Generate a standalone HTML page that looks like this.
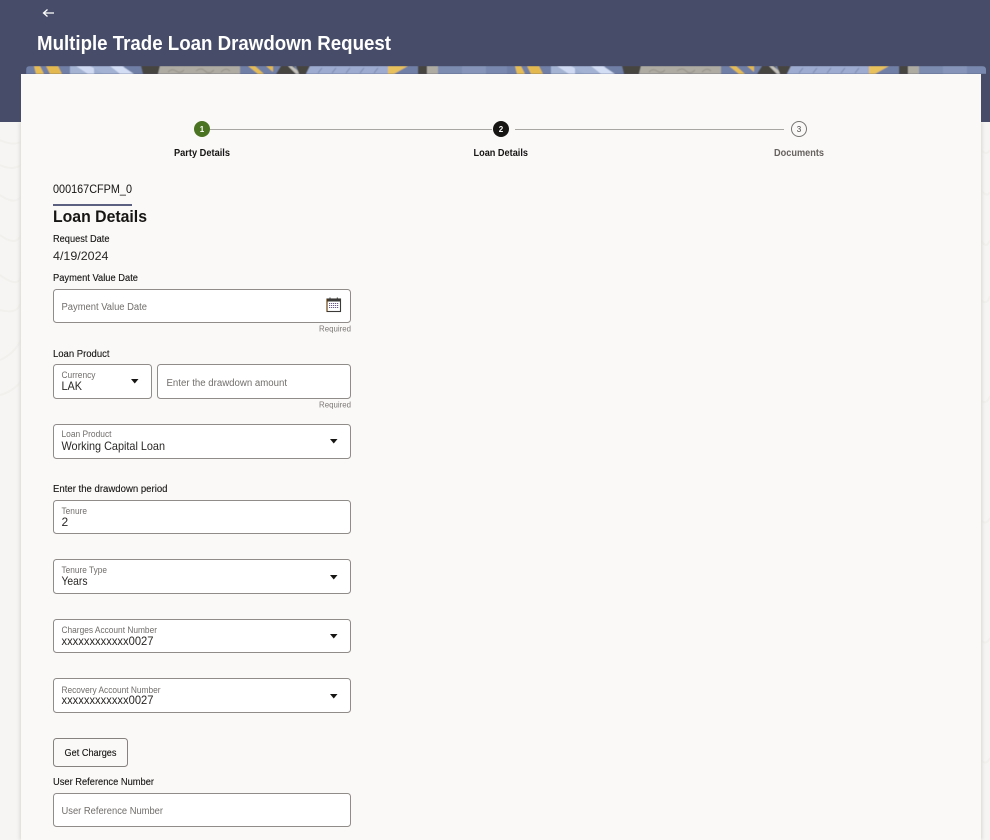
<!DOCTYPE html>
<html lang="en">
<head>
<meta charset="utf-8">
<title>Multiple Trade Loan Drawdown Request</title>
<style>
html,body{margin:0;padding:0;background:#f6f5f3;}
body{width:990px;height:840px;overflow:hidden;}
svg{display:block;}
text{font-family:"Liberation Sans",sans-serif;fill:#161513;}
.lbl{font-size:10px;stroke:#161513;stroke-width:.12px;}
.ph{font-size:10px;fill:#716e6b;}
.fl{font-size:9px;fill:#716e6b;}
.val{font-size:12px;fill:#2a2826;}
.req{font-size:8.4px;fill:#7c7976;}
.box{fill:#fff;stroke:#8f8c8a;stroke-width:1;}
</style>
</head>
<body>
<svg width="990" height="840" viewBox="0 0 990 840" xmlns="http://www.w3.org/2000/svg">
<defs>
<filter id="soft" x="0" y="0" width="1" height="1"><feGaussianBlur stdDeviation=".45"/></filter>
<filter id="shade" x="-50%" y="0" width="200%" height="1"><feGaussianBlur stdDeviation="1.500"/></filter>
<g id="tile">
<rect x="0" y="66" width="481" height="8" fill="#6f7fa6"/>
<polygon points="8,66 14,66 18,74 10,74" fill="#e6bd55"/>
<polygon points="20,66 32,66 36,74 24,74" fill="#e3b94f"/>
<rect x="44" y="66" width="20" height="8" fill="#a4b3d2"/>
<polygon points="50,66 66,66 78,74 62,74" fill="#cfdaf2"/>
<rect x="68" y="66" width="30" height="8" fill="#9dadcf"/>
<polygon points="64,66 84,66 92,74 78,74" fill="#a3b2d3"/>
<polygon points="84,66 96,66 108,74 94,74" fill="#d3ddf4"/>
<polygon points="115,66 134,66 132,74 117,74" fill="#47453f"/>
<polygon points="134,66 214,66 214,74 132,74" fill="#aeaba2"/>
<path d="M142 72q4-4 8-1t8-1M170 71q5-4 9 0t9-1M195 72q5-5 9-1" fill="none" stroke="#94918a" stroke-width="1"/>
<polygon points="222,66 229,66 238,74 232,74" fill="#e6bd55"/>
<polygon points="240,66 247,66 247,72" fill="#e3b94f"/>
<polygon points="255,66 268,66 272,74 250,74" fill="#47453f"/>
<polygon points="262,66 266,66 276,74 270,74" fill="#c4c2bc"/>
<polygon points="270,66 284,66 280,74 273,74" fill="#47453f"/>
<polygon points="284,66 362,66 362,74 280,74" fill="#9dabd0"/>
<path d="M292 73l4-5M306 73l4-5M320 73l4-5M334 73l4-5M348 73l4-5" stroke="#7786aa" stroke-width="1"/>
<polygon points="362,66 382,66 368,74 362,74" fill="#e8c05c"/>
<rect x="392" y="66" width="9" height="8" fill="#47453f"/>
<rect x="401" y="66" width="11" height="8" fill="#aeaba2"/>
<rect x="412" y="66" width="24" height="8" fill="#7c8bb0"/>
<rect x="436" y="66" width="24" height="8" fill="#8594b8"/>
<rect x="460" y="66" width="21" height="8" fill="#7888ae"/>
</g>
<clipPath id="strip"><path d="M26 74V70q0-4 4-4H982q4 0 4 4v4z"/></clipPath>
</defs>

<rect width="990" height="840" fill="#f6f5f3"/>
<g fill="none" stroke="#f1f0ed" stroke-width="2">
<path d="M0 140q12 6 21 2M0 165q12 6 21 0M0 195q14 10 21 2M0 235q16 12 21 0M0 275q22 16 21 -4M0 310q22 6 21 -14M0 360q14-6 21-20M0 395q14-4 21-14"/>
<path d="M981 150q6 6 9 0M981 190q6 8 9 2M981 240q5 10 9 0M981 300q6 6 9-4M981 400q5 6 9-4M981 520q5 6 9-2M981 640q5 6 9-2M981 760q5 6 9-2"/>
</g>
<rect width="990" height="122" fill="#474c69"/>

<g clip-path="url(#strip)">
<g filter="url(#soft)">
<use href="#tile" x="26"/>
<use href="#tile" x="507"/>
</g>
</g>

<rect x="19.500" y="122" width="963" height="718" fill="#dedcd8" filter="url(#shade)"/>
<rect x="21" y="74" width="960" height="766" fill="#fbf9f8"/>

<path d="M54 13H43.500M47.500 9.500L43.500 13L47.500 16.500" fill="none" stroke="#fff" stroke-width="1.300"/>
<text x="37" y="50" font-size="20.500" font-weight="700" textLength="354" lengthAdjust="spacingAndGlyphs" style="fill:#fff">Multiple Trade Loan Drawdown Request</text>

<!-- stepper -->
<rect x="210" y="129" width="282" height="1" fill="#a9a7a4"/>
<rect x="515" y="129" width="269" height="1" fill="#a9a7a4"/>
<circle cx="202" cy="129" r="8" fill="#4b7422"/>
<text x="202" y="132" font-size="8" font-weight="700" text-anchor="middle" style="fill:#fff">1</text>
<circle cx="501" cy="129" r="8" fill="#161513"/>
<text x="501" y="132" font-size="8" font-weight="700" text-anchor="middle" style="fill:#fff">2</text>
<circle cx="799" cy="129" r="7.500" fill="#fbf9f8" stroke="#777572"/>
<text x="799" y="132" font-size="8" text-anchor="middle" style="fill:#444">3</text>
<text x="174" y="156" font-size="10" font-weight="700" textLength="56" lengthAdjust="spacingAndGlyphs">Party Details</text>
<text x="473.500" y="156" font-size="10" font-weight="700" textLength="54.500" lengthAdjust="spacingAndGlyphs">Loan Details</text>
<text x="774" y="156" font-size="10" font-weight="700" textLength="50" lengthAdjust="spacingAndGlyphs" style="fill:#65625f">Documents</text>

<!-- heading -->
<text x="53" y="193" font-size="12" textLength="79" lengthAdjust="spacingAndGlyphs">000167CFPM_0</text>
<rect x="53" y="204" width="79" height="2" fill="#5b6080"/>
<text x="53" y="222" font-size="17" font-weight="700" textLength="94" lengthAdjust="spacingAndGlyphs">Loan Details</text>

<text class="lbl" x="53" y="242" textLength="56.500" lengthAdjust="spacingAndGlyphs">Request Date</text>
<text class="val" x="53" y="260" textLength="55.500" lengthAdjust="spacingAndGlyphs">4/19/2024</text>

<text class="lbl" x="53" y="281" textLength="85" lengthAdjust="spacingAndGlyphs">Payment Value Date</text>
<rect class="box" x="53.500" y="289.500" width="297" height="33" rx="3"/>
<text class="ph" x="61.500" y="310" textLength="85.500" lengthAdjust="spacingAndGlyphs">Payment Value Date</text>
<g>
<rect x="327" y="299" width="13.500" height="12.500" fill="#fff" stroke="#3b3a38" stroke-width="1.100"/>
<rect x="327" y="299" width="13.500" height="2.500" fill="#3b3a38"/>
<rect x="329.500" y="297.500" width="1" height="3" fill="#3b3a38"/>
<rect x="336.800" y="297.500" width="1" height="3" fill="#3b3a38"/>
<path d="M329 303.500h9.500M329 305.500h9.500M329 307.500h9.500" stroke="#6b5a86" stroke-width="1" stroke-dasharray="1.200 .8"/>
<path d="M326.500 299v12.500" stroke="#c98a2e" stroke-width=".7"/>
</g>
<text class="req" x="319" y="331.500" textLength="32" lengthAdjust="spacingAndGlyphs">Required</text>

<text class="lbl" x="53" y="357" textLength="56.500" lengthAdjust="spacingAndGlyphs">Loan Product</text>
<rect class="box" x="53.500" y="364.500" width="98" height="34" rx="3"/>
<text class="fl" x="61.500" y="378" textLength="34" lengthAdjust="spacingAndGlyphs">Currency</text>
<text class="val" x="61.500" y="390" textLength="20.500" lengthAdjust="spacingAndGlyphs">LAK</text>
<polygon points="131,379 138.500,379 134.750,383.500" fill="#161513"/>
<rect class="box" x="157.500" y="364.500" width="193" height="34" rx="3"/>
<text class="ph" x="166.500" y="386" textLength="120.500" lengthAdjust="spacingAndGlyphs">Enter the drawdown amount</text>
<text class="req" x="319" y="407.500" textLength="32" lengthAdjust="spacingAndGlyphs">Required</text>

<rect class="box" x="53.500" y="424.500" width="297" height="34" rx="3"/>
<text class="fl" x="61.500" y="437" textLength="50" lengthAdjust="spacingAndGlyphs">Loan Product</text>
<text class="val" x="61.500" y="450" textLength="103.500" lengthAdjust="spacingAndGlyphs">Working Capital Loan</text>
<polygon points="330,439 337.500,439 333.750,443.500" fill="#161513"/>

<text class="lbl" x="53" y="492" textLength="114.500" lengthAdjust="spacingAndGlyphs">Enter the drawdown period</text>
<rect class="box" x="53.500" y="500.500" width="297" height="33" rx="3"/>
<text class="fl" x="61.500" y="514" textLength="25.500" lengthAdjust="spacingAndGlyphs">Tenure</text>
<text class="val" x="61.500" y="526">2</text>

<rect class="box" x="53.500" y="559.500" width="297" height="34" rx="3"/>
<text class="fl" x="61.500" y="573" textLength="45.500" lengthAdjust="spacingAndGlyphs">Tenure Type</text>
<text class="val" x="61.500" y="585" textLength="26" lengthAdjust="spacingAndGlyphs">Years</text>
<polygon points="330,575 337.500,575 333.750,579.500" fill="#161513"/>

<rect class="box" x="53.500" y="619.500" width="297" height="33" rx="3"/>
<text class="fl" x="61.500" y="633" textLength="95.500" lengthAdjust="spacingAndGlyphs">Charges Account Number</text>
<text class="val" x="61.500" y="645" textLength="92" lengthAdjust="spacingAndGlyphs">xxxxxxxxxxxx0027</text>
<polygon points="330,634 337.500,634 333.750,638.500" fill="#161513"/>

<rect class="box" x="53.500" y="678.500" width="297" height="34" rx="3"/>
<text class="fl" x="61.500" y="693" textLength="99" lengthAdjust="spacingAndGlyphs">Recovery Account Number</text>
<text class="val" x="61.500" y="704" textLength="92" lengthAdjust="spacingAndGlyphs">xxxxxxxxxxxx0027</text>
<polygon points="330,694 337.500,694 333.750,698.500" fill="#161513"/>

<rect x="53.500" y="738.500" width="74" height="28" rx="3" fill="none" stroke="#85827f"/>
<text x="64.500" y="756" font-size="10.500" textLength="52" lengthAdjust="spacingAndGlyphs" style="stroke:#161513;stroke-width:.12px">Get Charges</text>

<text class="lbl" x="53" y="785" textLength="101" lengthAdjust="spacingAndGlyphs">User Reference Number</text>
<rect class="box" x="53.500" y="793.500" width="297" height="33" rx="3"/>
<text class="ph" x="61.500" y="814" textLength="101.500" lengthAdjust="spacingAndGlyphs">User Reference Number</text>
</svg>
</body>
</html>
